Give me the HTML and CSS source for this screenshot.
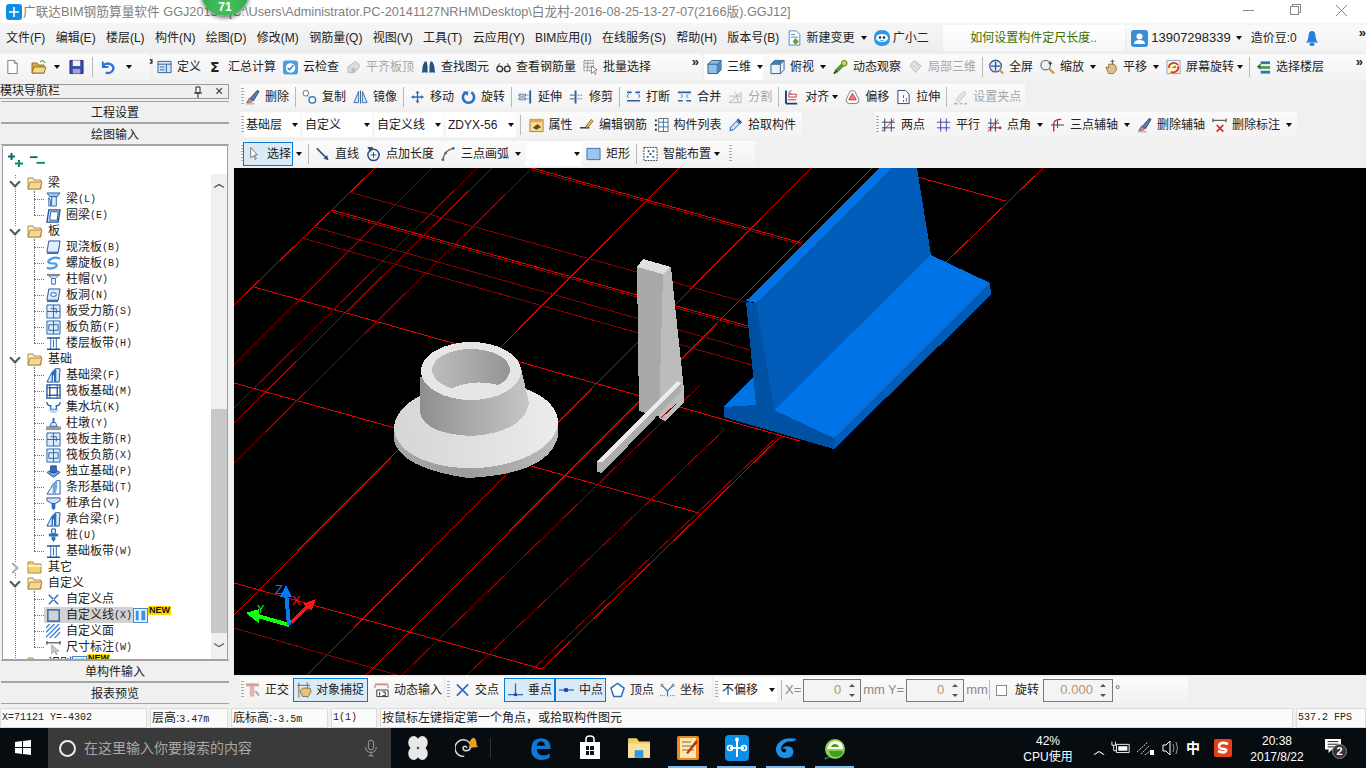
FILE: index.html
```html
<!DOCTYPE html>
<html lang="zh-CN">
<head>
<meta charset="utf-8">
<title>广联达BIM钢筋算量软件</title>
<link rel="stylesheet" href="styles.css">
</head>
<body>
<svg class="defs" width="0" height="0">
<defs>
<linearGradient id="gDisc" x1="0" x2="1" y1="0" y2="0"><stop offset="0" stop-color="#d6d6d6"/><stop offset=".5" stop-color="#e0e0e0"/><stop offset="1" stop-color="#ececec"/></linearGradient>
<linearGradient id="gRim" x1="0" x2="1" y1="0" y2="0"><stop offset="0" stop-color="#a8a8a8"/><stop offset=".45" stop-color="#9c9c9c"/><stop offset="1" stop-color="#bcbcbc"/></linearGradient>
<linearGradient id="gCone" x1="0" x2="1" y1="0" y2="0"><stop offset="0" stop-color="#8e8e8e"/><stop offset=".5" stop-color="#ababab"/><stop offset="1" stop-color="#c6c6c6"/></linearGradient>
<linearGradient id="gHole" x1="0" x2="1" y1="0" y2="0"><stop offset="0" stop-color="#bdbdbd"/><stop offset="1" stop-color="#949494"/></linearGradient>
</defs>
<symbol id="new" viewBox="0 0 16 16"><path d="M3 1h7l3 3v11H3z" fill="#fff" stroke="#777"/><path d="M10 1v3h3" fill="#ddd" stroke="#777"/></symbol>
<symbol id="open" viewBox="0 0 16 16"><path d="M1 4h5l1 2h6v8H1z" fill="#d9a93f" stroke="#96742a"/><path d="M3 8h12l-2 6H1z" fill="#f3d98c" stroke="#96742a"/><path d="M9 3q3-3 5 1" fill="none" stroke="#3a7d3a"/></symbol>
<symbol id="save" viewBox="0 0 16 16"><path d="M1 1h14v14H1z" fill="#3c4ba8" stroke="#27306e"/><path d="M4 1h8v6H4z" fill="#f2f2f2"/><path d="M4 10h8v5H4z" fill="#9aa3d4"/></symbol>
<symbol id="undo" viewBox="0 0 16 16"><path d="M3 2v6h6" fill="none" stroke="#2d75cf" stroke-width="2"/><path d="M3 7a6 5 0 1 1 3 7" fill="none" stroke="#2d75cf" stroke-width="2.6"/></symbol>
<symbol id="def" viewBox="0 0 16 16"><path d="M1 2h14v12H1z" fill="#d8e8f8" stroke="#2d5f99"/><path d="M1 5h14M3 8h5M3 11h5M10 5v9" stroke="#2d5f99"/></symbol>
<symbol id="cloud" viewBox="0 0 16 16"><rect x="0" y="1" width="16" height="15" rx="3" fill="#4a9fe3"/><circle cx="8" cy="9" r="5" fill="#fff"/><path d="M5 9l2 2 4-5" fill="none" stroke="#2d79c7" stroke-width="1.5"/></symbol>
<symbol id="flat" viewBox="0 0 16 16"><path d="M2 8l8-6 4 3v4l-6 5H2z" fill="#dcdcdc" stroke="#bbb"/><path d="M6 9h4v5H6z" fill="#bbb"/></symbol>
<symbol id="bino" viewBox="0 0 16 16"><path d="M1 14l1-8 2-4h2l1 5v7zM15 14l-1-8-2-4h-2L9 7v7z" fill="#27527f"/><path d="M2 14h4M10 14h4" stroke="#9bbbe0"/></symbol>
<symbol id="glass" viewBox="0 0 16 16"><circle cx="4" cy="10" r="3" fill="none" stroke="#333" stroke-width="1.4"/><circle cx="12" cy="10" r="3" fill="none" stroke="#333" stroke-width="1.4"/><path d="M1 9l3-5M15 9l-3-5M7 10h2" stroke="#333"/></symbol>
<symbol id="batch" viewBox="0 0 16 16"><path d="M1 1h10v11H1z" fill="#eef3f9" stroke="#777" stroke-dasharray="2 1"/><path d="M1 4h10M1 8h10M5 1v11" stroke="#999"/><path d="M9 7l6 4-3 1 2 3-1 1-2-3-2 2z" fill="#fff" stroke="#555" stroke-width=".7"/></symbol>
<symbol id="cube" viewBox="0 0 16 16"><path d="M1 5l4-4h10v10l-4 4H1z" fill="#8fc0e8" stroke="#2c5a86"/><path d="M1 5h10v10M11 5l4-4" fill="none" stroke="#2c5a86"/><path d="M11 5l4-4v10l-4 4z" fill="#4c88bd"/></symbol>
<symbol id="top" viewBox="0 0 16 16"><path d="M1 5l4-4h10v10l-4 4H1z" fill="#e9f2fa" stroke="#2c5a86"/><path d="M1 5h10v10M11 5l4-4" fill="none" stroke="#2c5a86"/><path d="M5 1h10l-4 4H1z" fill="#3e7cb4"/></symbol>
<symbol id="orbit" viewBox="0 0 16 16"><path d="M3 13L12 4" stroke="#4f9d2f" stroke-width="4"/><circle cx="12" cy="4" r="3" fill="#c7d94a" stroke="#52752a"/><path d="M1 15l3-3" stroke="#333" stroke-width="2"/></symbol>
<symbol id="part" viewBox="0 0 16 16"><path d="M2 6l5-5 7 6-6 7z" fill="#e2e2e2" stroke="#bdbdbd"/><path d="M5 6l4 3M8 3l4 4" stroke="#c9c9c9"/></symbol>
<symbol id="full" viewBox="0 0 16 16"><circle cx="7" cy="7" r="6.2" fill="#e6eefb" stroke="#3f5f90" stroke-width="1.4"/><path d="M7 2v10M2 7h10" stroke="#2656a6" stroke-width="1.4"/><path d="M11 11l4 4" stroke="#c79a3c" stroke-width="2.2"/></symbol>
<symbol id="zoom" viewBox="0 0 16 16"><circle cx="6" cy="6" r="5" fill="#eef2f6" stroke="#6f7f8f" stroke-width="1.4"/><path d="M10 10l5 5" stroke="#c79a3c" stroke-width="2.4"/><path d="M11 2v4M9 4h4" stroke="#333"/></symbol>
<symbol id="hand" viewBox="0 0 16 16"><path d="M3 8l3 1V5h6l2 3v4l-3 3H6z" fill="#dcc28c" stroke="#8d7440"/><path d="M10 0v5M8 2h4" stroke="#555"/></symbol>
<symbol id="rot" viewBox="0 0 16 16"><path d="M1 1h14v14H1z" fill="#fff6c8" stroke="#7ca7d3"/><path d="M3 9a5.5 5.5 0 0 1 10-3" fill="none" stroke="#d33" stroke-width="1.8"/><path d="M13 7a5.5 5.5 0 0 1-8 6" fill="none" stroke="#d33" stroke-width="1.8"/><path d="M6 9l4-3 1 3z" fill="#59a84a"/></symbol>
<symbol id="floor" viewBox="0 0 16 16"><path d="M5 2h10v3H5z" fill="#2c76b6"/><path d="M5 7h10v3H5z" fill="#46a04a"/><path d="M5 12h10v3H5z" fill="#2c76b6"/><path d="M5 4L1 8l4 3z" fill="#2a6b30"/></symbol>
<symbol id="del" viewBox="0 0 16 16"><path d="M2 14l3-5 3 3-2 2z" fill="#d88" stroke="#744"/><path d="M6 9l7-8 2 1-6 10z" fill="#5a7ec2" stroke="#345"/><path d="M1 15h9" stroke="#bbb" stroke-width="2"/></symbol>
<symbol id="copy" viewBox="0 0 16 16"><circle cx="4" cy="4" r="3" fill="#fff" stroke="#666"/><circle cx="11" cy="11" r="3.5" fill="#fff" stroke="#2c6fb3" stroke-width="1.4"/><path d="M6 7l3 2" stroke="#2c6fb3" stroke-dasharray="1 1"/></symbol>
<symbol id="mirror" viewBox="0 0 16 16"><path d="M6 2L1 14h5zM10 2l5 12h-5z" fill="#dbe8f6" stroke="#2c6fb3"/><path d="M8 1v14" stroke="#555"/></symbol>
<symbol id="move" viewBox="0 0 16 16"><path d="M8 1l2 3H6zM8 15l2-3H6zM1 8l3-2v4zM15 8l-3-2v4z" fill="#2c6fb3"/><path d="M8 3v10M3 8h10" stroke="#2c6fb3" stroke-width="1.4"/></symbol>
<symbol id="turn" viewBox="0 0 16 16"><path d="M5 3a6 6 0 1 0 6 0" fill="none" stroke="#2c6fc3" stroke-width="2.8"/><path d="M2 2l6 0-1 5z" fill="#2c6fc3"/></symbol>
<symbol id="ext" viewBox="0 0 16 16"><path d="M13 1v14" stroke="#2c5f9e" stroke-width="2"/><path d="M1 5h7v2H1zM1 9h7v2H1z" fill="none" stroke="#2c5f9e" stroke-width=".8"/><path d="M8 6h3M8 10h3" stroke="#555" stroke-dasharray="1 1"/></symbol>
<symbol id="trim" viewBox="0 0 16 16"><path d="M7 1v14" stroke="#2c5f9e" stroke-width="2"/><path d="M1 6h5M1 10h5" stroke="#2c5f9e"/><path d="M9 6h6M9 10h6" stroke="#777" stroke-dasharray="2 1"/></symbol>
<symbol id="brk" viewBox="0 0 16 16"><path d="M1 3h5M10 3h5M1 12h14" stroke="#2c5f9e" stroke-width="1.8"/><path d="M3 5l-2 2 2 2M13 5l2 2-2 2" fill="none" stroke="#2c6fb3"/></symbol>
<symbol id="mrg" viewBox="0 0 16 16"><path d="M1 3h14M1 12h5M10 12h5" stroke="#2c5f9e" stroke-width="1.8"/><path d="M4 5l2 2-2 2M12 5l-2 2 2 2" fill="none" stroke="#2c6fb3"/></symbol>
<symbol id="split" viewBox="0 0 16 16"><path d="M1 14L14 3v11z" fill="#eee" stroke="#bbb"/><path d="M1 7h12M8 2l3 12" stroke="#bbb"/></symbol>
<symbol id="algn" viewBox="0 0 16 16"><path d="M1 1v14M1 15h12" stroke="#223d7a" stroke-width="2"/><path d="M4 5h8v3H4z" fill="#fff" stroke="#c33"/><path d="M7 1L4 3l3 2" fill="none" stroke="#2c6fb3"/><path d="M3 11h9" stroke="#c33"/></symbol>
<symbol id="ofs" viewBox="0 0 16 16"><path d="M8 1q3 0 4 4l3 6q0 4-4 4H5q-4 0-4-4l3-6q1-4 4-4z" fill="#fff" stroke="#777"/><path d="M8 4l4 7H4z" fill="#e77" stroke="#c33"/></symbol>
<symbol id="str" viewBox="0 0 16 16"><path d="M2 1h8l4 4v10H2z" fill="#fff" stroke="#223d7a"/><path d="M8 6v3M8 11v2M11 9v4" stroke="#555"/></symbol>
<symbol id="grip" viewBox="0 0 16 16"><path d="M3 11l8-9 3 2-7 9z" fill="#e4e4e4" stroke="#c5c5c5"/><path d="M1 15h4M7 15h3M12 15h3" stroke="#bbb" stroke-width="2"/></symbol>
<symbol id="prop" viewBox="0 0 16 16"><path d="M1 2h14v13H1z" fill="#f7dc9c" stroke="#ad7f2a"/><path d="M1 2h14v3H1z" fill="#e9a64a"/><path d="M4 11l5-4 4 3-5 3z" fill="#6b4d1c"/></symbol>
<symbol id="edit" viewBox="0 0 16 16"><path d="M1 11h10" stroke="#222" stroke-width="1.4"/><path d="M7 10l6-8 2 2-6 7z" fill="#e8b958" stroke="#8d6c2a"/></symbol>
<symbol id="list" viewBox="0 0 16 16"><path d="M5 1h10v14H5z" fill="#fff" stroke="#666"/><path d="M5 5h10M5 10h10M10 1v14" stroke="#2c6fb3"/><path d="M1 3h2M1 8h2M1 13h2" stroke="#333" stroke-width="2"/></symbol>
<symbol id="pick" viewBox="0 0 16 16"><path d="M2 14l1-4 6-6 3 3-6 6z" fill="#cfe3f8" stroke="#1f58a8"/><path d="M9 3l2-2 4 4-2 2z" fill="#1f58a8"/></symbol>
<symbol id="two" viewBox="0 0 16 16"><path d="M4 1v14M11 1v14M1 5h14M1 11h14" stroke="#223d7a"/><path d="M2 14L14 2" stroke="#c22"/><circle cx="2" cy="14" r="1" fill="#3a3"/></symbol>
<symbol id="para" viewBox="0 0 16 16"><path d="M5 1v14M11 1v14M1 5h14M1 11h14" stroke="#3d3f9e"/></symbol>
<symbol id="ang" viewBox="0 0 16 16"><path d="M4 1v14M9 1v14M1 6h12M1 11h12" stroke="#223d7a"/><path d="M1 15L12 2" stroke="#c22"/><circle cx="14" cy="11" r="1.5" fill="#c22"/></symbol>
<symbol id="arcx" viewBox="0 0 16 16"><path d="M4 15V7q0-5 8-5" fill="none" stroke="#c22" stroke-width="1.4"/><path d="M1 8h14M8 3v8" stroke="#223d7a"/></symbol>
<symbol id="dim" viewBox="0 0 16 16"><path d="M1 1v4M15 1v4M1 3h14" stroke="#333"/><path d="M5 8l7 7M12 8l-7 7" stroke="#d22" stroke-width="1.8"/></symbol>
<symbol id="arrow" viewBox="0 0 16 16"><path d="M4 1v11l3-2 2 4 1-1-2-4h3z" fill="#fff" stroke="#555" stroke-width=".8"/></symbol>
<symbol id="line" viewBox="0 0 16 16"><path d="M2 2l12 12" stroke="#2a4f80" stroke-width="1.6"/><path d="M14 14l-5-1 4-4z" fill="#2a4f80"/></symbol>
<symbol id="plen" viewBox="0 0 16 16"><circle cx="8" cy="9" r="6" fill="none" stroke="#2a4f80" stroke-width="1.6"/><path d="M2 1h5l-2 4zM8 6v6M5 9h6" fill="#2a4f80" stroke="#2a4f80"/></symbol>
<symbol id="arc3" viewBox="0 0 16 16"><path d="M2 15Q3 4 13 2" fill="none" stroke="#c8542a" stroke-width="1.6"/><circle cx="13" cy="2" r="1.5" fill="#2c6fb3"/><circle cx="5" cy="7" r="1.5" fill="#2c6fb3"/><circle cx="2" cy="14" r="1.5" fill="#2c6fb3"/></symbol>
<symbol id="rect" viewBox="0 0 16 16"><path d="M1 2h14v12H1z" fill="#9ec5f0" stroke="#3a6cb0"/></symbol>
<symbol id="smart" viewBox="0 0 16 16"><path d="M1 1h14v14H1z" fill="#fff" stroke="#333" stroke-dasharray="2 1"/><path d="M5 4h2v2H5zM10 4h2v2h-2zM4 10h2v2H4zM10 10h2v2h-2zM7 7h2v2H7z" fill="#2c5f9e"/></symbol>
<symbol id="ortho" viewBox="0 0 16 16"><path d="M5 1h5v14H5z" fill="#e7b1b1"/><path d="M1 1h14v3H1z" fill="#d6a0a0"/><path d="M11 9l4 5" stroke="#aaa" stroke-width="2"/></symbol>
<symbol id="snap" viewBox="0 0 16 16"><path d="M2 0v16M11 0v16M0 3h14" stroke="#8a5d3a"/><path d="M3 9l3-3h8l1 4-3 5H6z" fill="#e3c27e" stroke="#8d7440"/></symbol>
<symbol id="dyn" viewBox="0 0 16 16"><path d="M1 1h14v2H1z" fill="#d88"/><path d="M1 3v3M15 3v3" stroke="#777"/><path d="M3 8h12v7H3z" fill="#fff" stroke="#333"/><path d="M6 10v4M9 10h3v4H9" stroke="#222" fill="none"/></symbol>
<symbol id="cross" viewBox="0 0 16 16"><path d="M2 2l12 12M14 2L2 14" stroke="#2d6fbd" stroke-width="1.8"/></symbol>
<symbol id="perp" viewBox="0 0 16 16"><path d="M8 1v12" stroke="#2d6fbd" stroke-width="1.4"/><path d="M0 13h16" stroke="#2d6fbd" stroke-width="1.4"/><rect x="6.500" y="11.500" width="3" height="3" fill="#2342a8"/></symbol>
<symbol id="mid" viewBox="0 0 16 16"><path d="M0 8h16" stroke="#2d6fbd" stroke-width="1.4"/><rect x="5.500" y="6" width="4" height="4" fill="#2342a8"/></symbol>
<symbol id="vert" viewBox="0 0 16 16"><path d="M8 1l7 5-3 9H4L1 6z" fill="#fff" stroke="#2d6fbd" stroke-width="1.6"/></symbol>
<symbol id="coord" viewBox="0 0 16 16"><path d="M8 9v6M8 9L2 3M8 9l6-6" stroke="#2d6fbd" stroke-width="1.3"/><circle cx="2" cy="3" r="1.200" fill="#fff" stroke="#333" stroke-width=".7"/><circle cx="14" cy="3" r="1.200" fill="#fff" stroke="#333" stroke-width=".7"/><path d="M0 14h5M11 14h5" stroke="#2d6fbd" stroke-dasharray="1 1"/></symbol>
<symbol id="fileg" viewBox="0 0 16 18"><path d="M2 1h8l4 4v12H2z" fill="#fff" stroke="#3c83c9"/><path d="M4 5h5M4 8h8" stroke="#3c83c9"/><path d="M9 9l4 4-4 4-3-4z" fill="#5fa62d"/></symbol>
<symbol id="bot" viewBox="0 0 18 18"><path d="M1 9q0-8 8-8t8 8q0 8-8 8t-8-8z" fill="#2a9ae8"/><ellipse cx="9" cy="9" rx="6" ry="4" fill="#fff"/><circle cx="7" cy="8.500" r="1.200" fill="#123"/><circle cx="11" cy="8.500" r="1.200" fill="#123"/><path d="M7 11q2 2 4 0" stroke="#2a9ae8" fill="none"/></symbol>
<symbol id="user" viewBox="0 0 17 17"><rect width="17" height="17" rx="3" fill="#3b8ed6"/><circle cx="8.500" cy="6.500" r="3" fill="#fff"/><path d="M3 14q0-4 5.500-4T14 14z" fill="#fff"/></symbol>
<symbol id="bell" viewBox="0 0 16 18"><path d="M8 1q4 0 4 6 0 4 3 7H1q3-3 3-7 0-6 4-6z" fill="#2a7de1"/><ellipse cx="8" cy="16" rx="3" ry="2" fill="#2a7de1"/></symbol>
<symbol id="folder" viewBox="0 0 16 14"><path d="M1 2h5l1 2h7v9H1z" fill="#fdf1c8" stroke="#a98b4a"/><path d="M3 6h12l-2 7H1z" fill="#f6d98f" stroke="#a98b4a"/></symbol>
<symbol id="fclosed" viewBox="0 0 16 14"><path d="M1 2h5l1 2h7v9H1z" fill="#f5d06b" stroke="#a98b4a"/><path d="M1 5h13v2H1z" fill="#fdf1c8"/></symbol>
<symbol id="beam" viewBox="0 0 16 16"><path d="M1 1h14l-3 4H4z" fill="#9cc8ef" stroke="#2664ad"/><path d="M6 5h5v10H6zM3 6l2 3v6H3z" fill="#dbe9f8" stroke="#2664ad"/></symbol>
<symbol id="ring" viewBox="0 0 16 16"><path d="M3 2h12l-2 13H1z" fill="#dbe9f8" stroke="#1e4f9c" stroke-width="1.4"/><path d="M5 4h8l-1 9H4z" fill="#fff" stroke="#1e4f9c"/></symbol>
<symbol id="slab" viewBox="0 0 16 16"><path d="M3 1h12l-2 12H1z" fill="#e2effb" stroke="#1e4f9c"/><path d="M1 13h12l2-12v3l-2 11H1z" fill="#2d6fbd"/></symbol>
<symbol id="spiral" viewBox="0 0 16 16"><path d="M15 3q-6-3-11 1t6 4q4 3-3 5-4 1-6-1" fill="none" stroke="#4b9fe6" stroke-width="2.4"/></symbol>
<symbol id="cap" viewBox="0 0 16 16"><path d="M1 2h14v2H1z" fill="#888"/><path d="M3 4h10l-3 3H6z" fill="#d8e6f4" stroke="#2664ad" stroke-width=".7"/><path d="M6 7h4v6H6z" fill="#fff" stroke="#2664ad"/></symbol>
<symbol id="hole" viewBox="0 0 16 16"><path d="M3 1h12l-2 12H1z" fill="#dbe9f8" stroke="#1e4f9c"/><ellipse cx="8" cy="7" rx="3" ry="2" fill="#fff" stroke="#1e4f9c"/><path d="M1 13h12v2H1z" fill="#2d6fbd"/></symbol>
<symbol id="rebar" viewBox="0 0 16 16"><path d="M1 1h14v14H1z" fill="#dbe9f8" stroke="#2664ad"/><path d="M8 1v14M1 8h14" stroke="#2664ad"/><path d="M5 5h6v5" fill="none" stroke="#2664ad"/></symbol>
<symbol id="neg" viewBox="0 0 16 16"><path d="M1 1h14v14H1z" fill="#dbe9f8" stroke="#2664ad"/><path d="M8 1v14M3 5h10v6H3z" fill="none" stroke="#2664ad"/></symbol>
<symbol id="band" viewBox="0 0 16 16"><path d="M1 2h14M1 14h14" stroke="#1e4f9c" stroke-width="1.6"/><path d="M5 2v12M11 2v12M8 4v8" stroke="#2664ad"/></symbol>
<symbol id="fbeam" viewBox="0 0 16 16"><path d="M1 15l3-6 2-4 5-5 4 1-1 14z" fill="#dbe9f8" stroke="#1e4f9c"/><path d="M6 5l5-5v15H6z" fill="#2d6fbd"/><path d="M8 8v7" stroke="#fff"/></symbol>
<symbol id="raft" viewBox="0 0 16 16"><path d="M1 1h14v14H1z" fill="#fff" stroke="#1e4f9c" stroke-width="1.4"/><path d="M4 4h8v8H4zM1 4h14M1 12h14M4 1v14M12 1v14" fill="none" stroke="#1e4f9c"/></symbol>
<symbol id="pit" viewBox="0 0 16 16"><path d="M1 2q0 4 4 4v4h6V6q4 0 4-4" fill="none" stroke="#2664ad" stroke-width="1.4"/><path d="M2 10q6 8 12 0" fill="#bcd7f4"/></symbol>
<symbol id="pier" viewBox="0 0 16 16"><path d="M0 11h16v4H0z" fill="#999"/><path d="M4 11l2-4h4l2 4z" fill="#dbe9f8" stroke="#2664ad"/><path d="M7 2h2v5H7z" fill="#2664ad"/></symbol>
<symbol id="iso" viewBox="0 0 16 16"><path d="M1 9l7-4 7 4-7 5z" fill="#6fa9e0" stroke="#1e4f9c"/><path d="M5 2h6v7H5z" fill="#2d6fbd" stroke="#1e4f9c"/></symbol>
<symbol id="strip" viewBox="0 0 16 16"><path d="M1 15l4-6 2-4 5-5 3 1v14z" fill="#fff" stroke="#1e4f9c"/><path d="M7 5l5-5v8l-2 7H7z" fill="#6fa9e0"/></symbol>
<symbol id="pcap" viewBox="0 0 16 16"><path d="M1 2h14v3L10 8H6L1 5z" fill="#cfe3f8" stroke="#1e4f9c"/><path d="M6 8h4v5l-2 2-2-2z" fill="#2d6fbd"/></symbol>
<symbol id="pile" viewBox="0 0 16 16"><path d="M6 1h4v5H6z" fill="#dbe9f8" stroke="#1e4f9c"/><path d="M3 6h10v3H3z" fill="#2d6fbd"/><path d="M6 9h4v3l-2 3-2-3z" fill="#2d6fbd"/></symbol>
<symbol id="xpt" viewBox="0 0 16 16"><path d="M3 3l10 10M13 3L3 13" stroke="#2664ad" stroke-width="1.4"/><path d="M7 7h2v2H7z" fill="#fff" stroke="#2664ad" stroke-width=".5"/></symbol>
<symbol id="xline" viewBox="0 0 16 16"><path d="M2 2h12v12H2z" fill="none" stroke="#1e4f9c" stroke-width="1.3"/><path d="M1 1h2v2H1zM13 1h2v2h-2zM1 13h2v2H1zM13 13h2v2h-2z" fill="#2d78d8"/></symbol>
<symbol id="hatch" viewBox="0 0 16 16"><path d="M0 4l4-4M0 9l9-9M0 14L14 0M4 15L15 4M9 15l6-6" stroke="#2d78d8" stroke-width="1.3"/></symbol>
<symbol id="dimc" viewBox="0 0 16 16"><path d="M1 1v4M15 1v4M1 3h14" stroke="#222"/><path d="M6 5v10l3-3 2 4 1-1-2-3h4z" fill="#c8c8c8" stroke="#999" stroke-width=".7"/></symbol>
<symbol id="cols" viewBox="0 0 16 16"><rect x=".5" y=".5" width="15" height="15" fill="#e6f1fc" stroke="#3c83c9"/><path d="M3 3h3v10H3zM9 3h4v10H9z" fill="#3c93e6"/></symbol>
<symbol id="win" viewBox="0 0 18 18"><path d="M1 3l7-1v6H1zM9 2l8-1v7H9zM1 9h7v6l-7-1zM9 9h8v7l-8-1z" fill="#fff"/></symbol>
<symbol id="mic" viewBox="0 0 16 20"><rect x="5" y="1" width="6" height="11" rx="3" fill="none" stroke="#aaa"/><path d="M2 9q0 6 6 6t6-6M8 15v4M5 19h6" fill="none" stroke="#aaa"/></symbol>
<symbol id="pin" viewBox="0 0 22 24"><ellipse cx="7" cy="7" rx="5" ry="6" fill="#e8e8e8"/><ellipse cx="15" cy="7" rx="5" ry="6" fill="#e8e8e8"/><ellipse cx="7" cy="17" rx="5" ry="6" fill="#e8e8e8"/><ellipse cx="15" cy="17" rx="5" ry="6" fill="#e8e8e8"/></symbol>
<symbol id="swirl" viewBox="0 0 26 24"><path d="M10 21a9 9 0 1 1 7-13q1 7-6 7-3-1-2-4 3-2 4 1" fill="none" stroke="#ddd" stroke-width="1.600"/><path d="M15 12q1-3 1-7 2-4 4-4t3 4q0 4 2 6z" fill="#e3a41c"/></symbol>
<symbol id="edge" viewBox="0 0 22 24"><path d="M11 3q9 0 9 10H7q1 6 6 6 3 0 6-2v4q-3 2-7 2Q2 23 2 13 2 3 11 3zm4 7q-1-4-4-4-3 0-4 4z" fill="#0f78d4"/></symbol>
<symbol id="store" viewBox="0 0 22 26"><path d="M1 7h20v17H1z" fill="#fff"/><path d="M7 7V4q0-3 4-3t4 3v3" fill="none" stroke="#fff" stroke-width="1.6"/><path d="M7 11h3v4H7zM11 11h4v4h-4zM7 16h3v4H7zM11 16h4v4h-4z" fill="#111"/></symbol>
<symbol id="expl" viewBox="0 0 22 22"><path d="M1 2h8l2 3h10v15H1z" fill="#f1cd62"/><path d="M1 7h20v13H1z" fill="#fbe29a"/><path d="M7 13h8v7H7z" fill="#2d9be3"/></symbol>
<symbol id="note" viewBox="0 0 24 26"><rect x="1" y="1" width="22" height="24" rx="2" fill="#f0871f"/><rect x="4" y="3" width="16" height="20" fill="#fce9b2"/><path d="M6 7h9M6 11h12M6 15h12" stroke="#8c6a2a"/><path d="M10 18L20 5l2 2-10 12z" fill="#b23b1b"/></symbol>
<symbol id="gblue" viewBox="0 0 24 26"><rect width="24" height="26" rx="4" fill="#0a8fe8"/><path d="M12 4v18M5 13h14" stroke="#fff" stroke-width="2"/><circle cx="12" cy="4.500" r="2" fill="#fff"/><circle cx="5" cy="13" r="2.500" fill="none" stroke="#fff" stroke-width="1.600"/><circle cx="19" cy="13" r="2.500" fill="none" stroke="#fff" stroke-width="1.600"/></symbol>
<symbol id="gg" viewBox="0 0 26 26"><path d="M24 3Q6 0 2 13q0 10 9 11 10 0 10-7 0-6-7-6-4 0-5 3 3-1 4 1t-2 3q-4-1-3-6 3-7 11-6 4 0 5-3z" fill="#1f90e6"/></symbol>
<symbol id="ie" viewBox="0 0 24 26"><circle cx="12" cy="14" r="10" fill="#8ed24c"/><path d="M4 14h16q0-8-8-8-6 0-8 8z" fill="#fff"/><path d="M8 12h8q-1-3-4-3t-4 3zM6 16q1 6 7 6 4 0 7-4l-1-2H8z" fill="#3f9e1f"/><path d="M3 22Q0 26 6 22" stroke="#2a7" fill="none"/></symbol>
<symbol id="batt" viewBox="0 0 22 16"><path d="M6 4h14v9H6z" fill="none" stroke="#fff"/><path d="M8 6h10v5H8z" fill="#fff"/><path d="M1 1v4h4V1M3 5v6h3" fill="none" stroke="#fff"/></symbol>
<symbol id="wifi" viewBox="0 0 20 16"><path d="M1 12L12 2M5 14l8-8M9 15l5-4" stroke="#ddd" stroke-dasharray="2 1" fill="none"/><path d="M14 10h4v5h-4z" fill="#fff"/></symbol>
<symbol id="vol" viewBox="0 0 18 16"><path d="M1 5h3l4-4v14l-4-4H1z" fill="none" stroke="#fff"/><path d="M11 4q2 4 0 8M14 2q3 6 0 12" fill="none" stroke="#999"/></symbol>
<symbol id="sogou" viewBox="0 0 18 18"><rect width="18" height="18" rx="2" fill="#e4411a"/><path d="M14 5Q6 2 5 7q0 3 5 3 4 1 1 3-3 1-7-1" fill="none" stroke="#fff" stroke-width="2.600"/></symbol>
<symbol id="noti" viewBox="0 0 20 18"><path d="M1 1h18v12H9l-4 4v-4H1z" fill="#fff"/><path d="M4 4h12M4 7h12M4 10h8" stroke="#111"/></symbol>
<symbol id="logo" viewBox="0 0 16 16"><rect width="16" height="16" rx="3" fill="#0d8ee6"/><path d="M8 3v10M3 8h10" stroke="#fff" stroke-width="1.600"/></symbol>
<symbol id="plus2" viewBox="0 0 15 14"><path d="M0 3.500h7M3.500 0v7" stroke="#0e6a63" stroke-width="2"/><path d="M7 10.500h8M11 7v7" stroke="#0e8a63" stroke-width="2"/></symbol>
<symbol id="minus2" viewBox="0 0 16 14"><path d="M0 4h8" stroke="#0e6a63" stroke-width="2"/><path d="M7 10h9" stroke="#0e8a63" stroke-width="2"/></symbol>
<symbol id="navpin" viewBox="0 0 10 12"><path d="M3 1h4v6H3zM1 7h8M5 7v5" fill="#fff" stroke="#222"/></symbol>
<symbol id="wclose" viewBox="0 0 11 11"><path d="M0 0l11 11M11 0L0 11" stroke="#888"/></symbol>
</svg>

<header class="titlebar">
  <svg class="logo"><use href="#logo"/></svg>
  <span class="ttext">广联达BIM钢筋算量软件 GGJ2013 - [C:\Users\Administrator.PC-20141127NRHM\Desktop\白龙村-2016-08-25-13-27-07(2166版).GGJ12]</span>
  <span class="badge">71</span>
  <span class="winbtns">
    <span class="wmin"></span><span class="wmax"></span><svg class="wclose"><use href="#wclose"/></svg>
  </span>
</header>

<nav class="menubar">
  <span>文件(F)</span><span>编辑(E)</span><span>楼层(L)</span><span>构件(N)</span><span>绘图(D)</span><span>修改(M)</span><span>钢筋量(Q)</span><span>视图(V)</span><span>工具(T)</span><span>云应用(Y)</span><span>BIM应用(I)</span><span>在线服务(S)</span><span>帮助(H)</span><span>版本号(B)</span>
  <span class="t t-new"><svg class="i"><use href="#fileg"/></svg>新建变更<b class="c"></b></span>
  <span class="t t-bot"><svg class="i i18"><use href="#bot"/></svg>广小二</span>
  <span class="tip">如何设置构件定尺长度..</span>
  <span class="acct">
    <svg class="i i17"><use href="#user"/></svg><span class="phone">13907298339</span><b class="c c2"></b><span class="bean">造价豆:0</span><svg class="i bell"><use href="#bell"/></svg><span class="more">»</span>
  </span>
</nav>

<div class="tb1">
  <div class="panel p-file">
    <svg class="i"><use href="#new"/></svg>
    <svg class="i i-open"><use href="#open"/></svg><b class="c"></b>
    <svg class="i i-save"><use href="#save"/></svg>
    <i class="sep"></i>
    <svg class="i"><use href="#undo"/></svg><b class="c"></b>
    <span class="more m-up">»</span>
  </div>
  <div class="panel p-main">
    <span class="t"><svg class="i"><use href="#def"/></svg>定义</span>
    <span class="t"><span class="sigma">Σ</span>汇总计算</span>
    <span class="t"><svg class="i"><use href="#cloud"/></svg>云检查</span>
    <span class="t off"><svg class="i"><use href="#flat"/></svg>平齐板顶</span>
    <span class="t"><svg class="i"><use href="#bino"/></svg>查找图元</span>
    <span class="t"><svg class="i"><use href="#glass"/></svg>查看钢筋量</span>
    <span class="t"><svg class="i"><use href="#batch"/></svg>批量选择</span>
    <span class="more m-end">»</span>
  </div>
  <div class="panel p-view">
    <span class="t whitebtn"><svg class="i"><use href="#cube"/></svg>三维<b class="c"></b></span>
    <span class="t"><svg class="i"><use href="#top"/></svg>俯视<b class="c"></b></span>
    <span class="t"><svg class="i"><use href="#orbit"/></svg>动态观察</span>
    <span class="t off"><svg class="i"><use href="#part"/></svg>局部三维</span>
    <i class="sep"></i>
    <span class="t"><svg class="i"><use href="#full"/></svg>全屏</span>
    <span class="t"><svg class="i"><use href="#zoom"/></svg>缩放<b class="c"></b></span>
    <span class="t"><svg class="i"><use href="#hand"/></svg>平移<b class="c"></b></span>
    <span class="t"><svg class="i"><use href="#rot"/></svg>屏幕旋转<b class="c c1"></b></span>
    <i class="sep"></i>
    <span class="t"><svg class="i"><use href="#floor"/></svg>选择楼层</span>
    <span class="more m-end">»</span>
  </div>
</div>

<div class="work">
  <aside class="nav">
    <div class="navhead"><span>模块导航栏</span><svg class="navpin"><use href="#navpin"/></svg><span class="navx">×</span></div>
    <div class="navbtn">工程设置</div>
    <div class="navbtn">绘图输入</div>
    <div class="treebox">
      <div class="treetools"><svg class="pm"><use href="#plus2"/></svg><svg class="pm"><use href="#minus2"/></svg></div>
      <div class="treewrap">
        <ul class="tree">
          <li class="par"><span class="chev"></span><svg class="fd"><use href="#folder"/></svg>梁</li>
          <li class="ch"><svg class="ti"><use href="#beam"/></svg>梁<i>(L)</i></li>
          <li class="ch last"><svg class="ti"><use href="#ring"/></svg>圈梁<i>(E)</i></li>
          <li class="par"><span class="chev"></span><svg class="fd"><use href="#folder"/></svg>板</li>
          <li class="ch"><svg class="ti"><use href="#slab"/></svg>现浇板<i>(B)</i></li>
          <li class="ch"><svg class="ti"><use href="#spiral"/></svg>螺旋板<i>(B)</i></li>
          <li class="ch"><svg class="ti"><use href="#cap"/></svg>柱帽<i>(V)</i></li>
          <li class="ch"><svg class="ti"><use href="#hole"/></svg>板洞<i>(N)</i></li>
          <li class="ch"><svg class="ti"><use href="#rebar"/></svg>板受力筋<i>(S)</i></li>
          <li class="ch"><svg class="ti"><use href="#neg"/></svg>板负筋<i>(F)</i></li>
          <li class="ch last"><svg class="ti"><use href="#band"/></svg>楼层板带<i>(H)</i></li>
          <li class="par"><span class="chev"></span><svg class="fd"><use href="#folder"/></svg>基础</li>
          <li class="ch"><svg class="ti"><use href="#fbeam"/></svg>基础梁<i>(F)</i></li>
          <li class="ch"><svg class="ti"><use href="#raft"/></svg>筏板基础<i>(M)</i></li>
          <li class="ch"><svg class="ti"><use href="#pit"/></svg>集水坑<i>(K)</i></li>
          <li class="ch"><svg class="ti"><use href="#pier"/></svg>柱墩<i>(Y)</i></li>
          <li class="ch"><svg class="ti"><use href="#rebar"/></svg>筏板主筋<i>(R)</i></li>
          <li class="ch"><svg class="ti"><use href="#neg"/></svg>筏板负筋<i>(X)</i></li>
          <li class="ch"><svg class="ti"><use href="#iso"/></svg>独立基础<i>(P)</i></li>
          <li class="ch"><svg class="ti"><use href="#strip"/></svg>条形基础<i>(T)</i></li>
          <li class="ch"><svg class="ti"><use href="#pcap"/></svg>桩承台<i>(V)</i></li>
          <li class="ch"><svg class="ti"><use href="#fbeam"/></svg>承台梁<i>(F)</i></li>
          <li class="ch"><svg class="ti"><use href="#pile"/></svg>桩<i>(U)</i></li>
          <li class="ch last"><svg class="ti"><use href="#band"/></svg>基础板带<i>(W)</i></li>
          <li class="par"><span class="chev closed"></span><svg class="fd"><use href="#fclosed"/></svg>其它</li>
          <li class="par"><span class="chev"></span><svg class="fd"><use href="#folder"/></svg>自定义</li>
          <li class="ch"><svg class="ti"><use href="#xpt"/></svg>自定义点</li>
          <li class="ch"><span class="sel"><svg class="ti"><use href="#xline"/></svg>自定义线<i>(X)</i></span><svg class="ti2"><use href="#cols"/></svg><span class="newtag">NEW</span></li>
          <li class="ch"><svg class="ti"><use href="#hatch"/></svg>自定义面</li>
          <li class="ch last"><svg class="ti"><use href="#dimc"/></svg>尺寸标注<i>(W)</i></li>
          <li class="par"><span class="chev"></span><svg class="fd"><use href="#folder"/></svg>识别<svg class="ti2"><use href="#cols"/></svg><span class="newtag">NEW</span></li>
        </ul>
        <div class="scroll">
          <span class="sarrow">︿</span>
          <span class="strack"><span class="sthumb"></span></span>
          <span class="sarrow">﹀</span>
        </div>
      </div>
    </div>
    <div class="navbtn nb2">单构件输入</div>
    <div class="navbtn">报表预览</div>
  </aside>

  <main class="main">
    <div class="row ra">
      <div class="panel p-a">
        <i class="grip"></i>
        <span class="t"><svg class="i"><use href="#del"/></svg>删除</span><i class="sep"></i>
        <span class="t"><svg class="i"><use href="#copy"/></svg>复制</span>
        <span class="t"><svg class="i"><use href="#mirror"/></svg>镜像</span><i class="sep"></i>
        <span class="t"><svg class="i"><use href="#move"/></svg>移动</span>
        <span class="t"><svg class="i"><use href="#turn"/></svg>旋转</span><i class="sep"></i>
        <span class="t"><svg class="i"><use href="#ext"/></svg>延伸</span>
        <span class="t"><svg class="i"><use href="#trim"/></svg>修剪</span><i class="sep"></i>
        <span class="t"><svg class="i"><use href="#brk"/></svg>打断</span>
        <span class="t"><svg class="i"><use href="#mrg"/></svg>合并</span>
        <span class="t off"><svg class="i"><use href="#split"/></svg>分割</span><i class="sep"></i>
        <span class="t"><svg class="i"><use href="#algn"/></svg>对齐<b class="c c1"></b></span>
        <span class="t"><svg class="i"><use href="#ofs"/></svg>偏移</span>
        <span class="t"><svg class="i"><use href="#str"/></svg>拉伸</span><i class="sep"></i>
        <span class="t off"><svg class="i"><use href="#grip"/></svg>设置夹点</span>
      </div>
    </div>
    <div class="row rb">
      <div class="panel p-b">
        <i class="grip"></i>
        <span class="combo cw56">基础层<b class="c"></b></span>
        <span class="combo cw69">自定义<b class="c"></b></span>
        <span class="combo cw68">自定义线<b class="c"></b></span>
        <span class="combo cw70">ZDYX-56<b class="c"></b></span>
        <i class="sep"></i>
        <span class="t"><svg class="i"><use href="#prop"/></svg>属性</span>
        <span class="t"><svg class="i"><use href="#edit"/></svg>编辑钢筋</span>
        <span class="t"><svg class="i"><use href="#list"/></svg>构件列表</span>
        <span class="t"><svg class="i"><use href="#pick"/></svg>拾取构件</span>
      </div>
      <div class="panel p-b2">
        <i class="grip"></i>
        <span class="t t-two"><svg class="i"><use href="#two"/></svg>两点</span>
        <span class="t"><svg class="i"><use href="#para"/></svg>平行</span>
        <span class="t"><svg class="i"><use href="#ang"/></svg>点角<b class="c"></b></span>
        <span class="t"><svg class="i"><use href="#arcx"/></svg>三点辅轴<b class="c"></b></span>
        <span class="t"><svg class="i"><use href="#del"/></svg>删除辅轴</span>
        <span class="t"><svg class="i"><use href="#dim"/></svg>删除标注<b class="c"></b></span>
      </div>
    </div>
    <div class="row rc">
      <div class="panel p-c">
        <i class="grip"></i>
        <span class="t active pick"><svg class="i"><use href="#arrow"/></svg>选择</span><b class="c c3"></b><i class="sep"></i>
        <span class="t"><svg class="i"><use href="#line"/></svg>直线</span>
        <span class="t"><svg class="i"><use href="#plen"/></svg>点加长度</span>
        <span class="t"><svg class="i"><use href="#arc3"/></svg>三点画弧<b class="c"></b></span>
        <span class="combo cw56 empty"><b class="c"></b></span>
        <span class="t"><svg class="i"><use href="#rect"/></svg>矩形</span><i class="sep"></i>
        <span class="t"><svg class="i"><use href="#smart"/></svg>智能布置<b class="c c1"></b></span>
      </div>
      <div class="panel p-c2"><i class="grip"></i></div>
    </div>

    <svg class="canvas" viewBox="234 168 1132 507" width="1132" height="507" shape-rendering="crispEdges">
      <rect x="234" y="168" width="1132" height="507" fill="#000"/>
      <g fill="none" stroke="#e00000" stroke-width="1">
        <path d="M254 287L800 441M234 383L699 513M234 583L542 669M332 210L748 326M532 168L802 243M884 168L1006 201"/>
        <path d="M375 168L234 305M679 168L234 615M811 168L307 675M872 168L366 675M781 436L542 669M1043 168L945 263"/>
        <path d="M492 168L234 423" stroke="#b40000"/>
      </g>
      <g fill="none" stroke="#8c0000" stroke-width="1">
        <path d="M234 628L397 675M349 192L745 302M314 227L750 350M302 238L752 365M332 212L748 328M532 170L802 245"/>
        <path d="M432 168L234 365M477 168L234 408M532 168L234 463M700 385L402 675M779 435L527 675M724 430L467 675"/>
      </g>

      <g class="washer">
        <path d="M394 427V440Q400 468 468 478Q550 474 558 436V423z" fill="url(#gRim)"/>
        <ellipse cx="476" cy="425" rx="82" ry="43" fill="url(#gDisc)" transform="rotate(-3 476 425)"/>
        <path d="M420 377V413Q425 434 472 436Q524 432 529 403L521 368z" fill="url(#gCone)"/>
        <ellipse cx="471" cy="371" rx="50" ry="29" fill="#e6e6e6"/>
        <ellipse cx="471" cy="370" rx="39" ry="21" fill="url(#gHole)"/>
        <path d="M448 390Q472 378 498 385Q488 391 471 392Q456 392 448 390z" fill="#e6e6e6"/>
      </g>

      <g class="wall">
        <path d="M637 267L643 259L671 267L663 274z" fill="#e0e0e0"/>
        <path d="M637 267L663 274L665 418L645 413L639 411z" fill="#a9a9a9"/>
        <path d="M663 274L671 267L684 390V402L665 421L659 418z" fill="#bcbcbc"/>
        <path d="M602 462L681 383V391L602 473L597 472V462z" fill="#adadad"/>
        <path d="M677 381L681 383L602 462H597z" fill="#ececec"/>
        <path d="M661 418L676 404" stroke="#a00000" fill="none"/>
      </g>

      <g class="tbeam">
        <path d="M723.500 407L753.600 377L756 405z" fill="#0073e6"/>
        <path d="M931 255L990 283L834 438L774 410z" fill="#0073e6"/>
        <path d="M990 283L991 295L834 449V438z" fill="#005cb8"/>
        <path d="M756 303L892 168H917L931 255L774 410z" fill="#005cb8"/>
        <path d="M746 301L880 168H892L756 303z" fill="#0073e6"/>
        <path d="M746 302L756 303L774 410L834 438V449L723.500 417V407L756 405z" fill="#0050a4"/>
      </g>

      <g class="axes" fill="none">
        <path d="M289 625L286 592" stroke="#0a78f0" stroke-width="4"/>
        <path d="M286 586L281 596H291z" fill="#0a78f0" stroke="#0a78f0"/>
        <path d="M289 625L258 616" stroke="#14ff14" stroke-width="4"/>
        <path d="M247 613L258 610V622z" fill="#14ff14" stroke="#14ff14"/>
        <path d="M291 623L309 605" stroke="#ff1414" stroke-width="4"/>
        <path d="M315 600L304 604L311 610z" fill="#ff1414" stroke="#ff1414"/>
        <rect x="287" y="620" width="4" height="5" fill="#0a78f0"/>
        <text x="275" y="594" class="ax az">Z</text>
        <text x="257" y="613" class="ax ay">Y</text>
        <text x="292" y="605" class="ax ax1">X</text>
      </g>
    </svg>

    <div class="row rd">
      <div class="panel p-d">
        <i class="grip"></i>
        <span class="t"><svg class="i"><use href="#ortho"/></svg>正交</span>
        <span class="t active snap"><svg class="i"><use href="#snap"/></svg>对象捕捉</span>
        <span class="t"><svg class="i"><use href="#dyn"/></svg>动态输入</span>
      </div>
      <div class="panel p-d2">
        <i class="grip"></i>
        <span class="t"><svg class="i"><use href="#cross"/></svg>交点</span>
        <span class="t active seg"><svg class="i"><use href="#perp"/></svg>垂点</span>
        <span class="t active seg"><svg class="i"><use href="#mid"/></svg>中点</span>
        <span class="t"><svg class="i"><use href="#vert"/></svg>顶点</span>
        <span class="t t-coord"><svg class="i"><use href="#coord"/></svg>坐标</span>
      </div>
      <div class="panel p-d3">
        <i class="grip"></i>
        <span class="combo cw57">不偏移<b class="c"></b></span>
        <i class="sep s-off"></i>
        <span class="lbl">X=</span>
        <span class="spin s58">0<span class="arrows"><b class="au"></b><b class="ad"></b></span></span>
        <span class="lbl">mm</span><span class="lbl ly">Y=</span>
        <span class="spin s58">0<span class="arrows"><b class="au"></b><b class="ad"></b></span></span>
        <span class="lbl">mm</span>
        <i class="sep"></i>
        <span class="check"></span>
        <span class="rotl">旋转</span>
        <span class="spin s70">0.000<span class="arrows"><b class="au"></b><b class="ad"></b></span></span>
        <span class="lbl deg">°</span>
      </div>
    </div>
  </main>
</div>

<footer class="status">
  <span class="cell c1w mono">X=71121 Y=-4302</span>
  <span class="cell c2w"><span class="ml">层高:</span><span class="mono">3.47m</span></span>
  <span class="cell c3w"><span class="ml">底标高:</span><span class="mono">-3.5m</span></span>
  <span class="cell c4w mono">1(1)</span>
  <span class="cell c5w">按鼠标左键指定第一个角点，或拾取构件图元</span>
  <span class="cell c6w mono">537.2 FPS</span>
</footer>

<div class="taskbar">
  <svg class="start"><use href="#win"/></svg>
  <div class="search"><span class="cortana"></span><span class="ph">在这里输入你要搜索的内容</span><svg class="mic"><use href="#mic"/></svg></div>
  <div class="apps">
    <span class="app"><svg class="a"><use href="#pin"/></svg></span>
    <span class="app"><svg class="a"><use href="#swirl"/></svg></span>
    <i class="tsep"></i>
    <span class="app"><svg class="a"><use href="#edge"/></svg></span>
    <span class="app"><svg class="a"><use href="#store"/></svg></span>
    <span class="app"><svg class="a"><use href="#expl"/></svg></span>
    <span class="app on"><svg class="a"><use href="#note"/></svg></span>
    <span class="app on"><svg class="a"><use href="#gblue"/></svg></span>
    <span class="app on"><svg class="a"><use href="#gg"/></svg></span>
    <span class="app on"><svg class="a"><use href="#ie"/></svg></span>
  </div>
  <div class="cpu"><span>42%</span><span>CPU使用</span></div>
  <div class="tray">
    <span class="up">︿</span>
    <svg class="b"><use href="#batt"/></svg>
    <svg class="b"><use href="#wifi"/></svg>
    <svg class="b"><use href="#vol"/></svg>
    <span class="ime">中</span>
    <svg class="b sg"><use href="#sogou"/></svg>
  </div>
  <div class="clock"><span>20:38</span><span>2017/8/22</span></div>
  <div class="notif"><svg class="nt"><use href="#noti"/></svg><span class="nb">2</span></div>
</div>
</body>
</html>
```
FILE: styles.css
```css
*{box-sizing:border-box}
html,body{margin:0;padding:0}
body{width:1366px;height:768px;overflow:hidden;background:#f0f0f0;display:flex;flex-direction:column;font:12px/16px "Liberation Sans","Noto Sans CJK SC",sans-serif;color:#222}
.defs{position:absolute}
ul{list-style:none;margin:0;padding:0}

.titlebar{height:23px;flex:none;background:#fff;display:flex;align-items:center;padding-left:6px;position:relative;overflow:hidden}
.logo{width:16px;height:16px;margin-right:1px}
.ttext{color:#808080;font-size:12.7px;white-space:nowrap}
.badge{position:absolute;left:201px;top:-32px;width:48px;height:48px;border-radius:50%;background:radial-gradient(circle at 50% 80%,#46c25e,#1f9a3c);color:#fff;font-weight:bold;text-align:center;padding-top:31px;line-height:16px;box-shadow:0 2px 4px rgba(0,0,0,.55)}
.winbtns{position:absolute;right:0;top:0;height:23px;display:block;width:140px}
.wmin{position:absolute;left:17px;top:10px;width:11px;height:1px;background:#888}
.wmax{position:absolute;left:64px;top:6px;width:9px;height:9px;border:1px solid #888;background:#fff;box-shadow:2px -2px 0 -1px #fff,2px -2px 0 0 #888}
.wclose{position:absolute;left:110px;top:5px;width:11px;height:11px}

.menubar{height:30px;flex:none;display:flex;align-items:center;padding-left:6px;gap:10.3px;background:linear-gradient(#f6f6f6,#ededed);white-space:nowrap}
.t{display:inline-flex;align-items:center;white-space:nowrap;height:24px}
.t-new{margin-left:-3px}
.t-bot{margin-left:-4px}
.off{color:#a6a6a6}
.i{width:15px;height:16px;margin-right:5px;flex:none}
.i18{width:18px;height:18px;margin-right:2px}
.i17{width:17px;height:17px;margin-right:3px}
.c{display:inline-block;width:0;height:0;border:3.500px solid transparent;border-top:4px solid #111;border-bottom:0;margin-left:6px;flex:none}
.c1{margin-left:3px}
.c2{margin:0 9px 0 5px}
.c3{margin:0 0 0 2px}
.tip{width:187px;height:26px;margin-left:4px;background:linear-gradient(#fff,#f6f6f6);color:#3c6e00;line-height:26px;padding-left:27px;font-size:12px}
.acct{width:240px;height:26px;margin-left:-8px;background:linear-gradient(#fafafa,#f2f2f2);display:flex;align-items:center;padding-left:4px}
.phone{font-size:13px}
.bell{margin:0 0 0 8px;width:14px;height:18px}
.more{font-size:13px;font-weight:bold;line-height:10px}
.acct .more{margin-left:40px;margin-top:-10px}

.tb1{height:28px;flex:none;display:flex;padding-top:1px;gap:3px}
.panel{display:flex;align-items:center;background:linear-gradient(#fbfbfb,#f2f2f2);height:26px;white-space:nowrap}
.p-file{width:150px;padding-left:5px;gap:0}
.i-open{margin:0 0 0 5px;width:18px}
.i-save{margin:0 6px 0 9px;width:15px}
.p-file .sep{margin:0 7px 0 2px}
.m-up{margin:-12px 0 0 17px}
.p-main{width:549px;padding-left:4px;gap:7px}
.p-main .t{gap:0}
.sigma{font:bold 14px "DejaVu Sans",sans-serif;width:18px;margin-left:2px}
.m-end{margin-left:auto;margin-right:3px;margin-top:-10px}
.p-view{flex:1;margin-left:-1px;padding-left:0;gap:7px}
.whitebtn{background:#fff;padding-left:3px;height:26px;width:59px;margin-right:0}
.sep{display:block;width:1px;height:20px;background:#b8b8b8;margin:0 -1px;flex:none}
.grip{display:block;width:3px;height:18px;margin:0 -6px 0 1px;flex:none;background:repeating-linear-gradient(#aaa 0 1px,transparent 1px 3px)}

.work{height:625px;flex:none;display:flex}
.nav{width:230px;flex:none;padding-top:3px;display:flex;flex-direction:column}
.navhead{height:15px;border:1px solid #9a9a9a;border-left:0;background:#efefef;display:flex;align-items:center;line-height:13px;margin-right:1px}
.navpin{margin-left:auto;margin-right:10px;width:10px;height:12px}
.navx{margin-right:3px;width:12px;text-align:center;font-size:14px;color:#333}
.navbtn{height:22px;flex:none;margin:0 1px;border-top:1px solid #a4a4a4;border-bottom:1px solid #a4a4a4;background:#f0f0f0;text-align:center;line-height:22px}
.navhead + .navbtn{margin-top:2px}
.treebox{height:515px;margin:0 2px;border:1px solid #a0a0a0;background:#fff;display:flex;flex-direction:column;flex:none}
.treetools{height:28px;display:flex;align-items:center;padding-left:5px;gap:7px;flex:none}
.pm{width:15px;height:14px}
.treewrap{flex:1;display:flex;min-height:0;overflow:hidden;position:relative}
.tree{flex:1;overflow:hidden;font-size:12px;padding-top:1px}
.tree li{height:16px;display:flex;align-items:center;white-space:nowrap;line-height:16px;background-image:repeating-linear-gradient(#777 0 1px,transparent 1px 2px);background-size:1px 100%;background-position:12px 0;background-repeat:no-repeat}
.tree i{font:10px "Liberation Mono",monospace;margin-left:0}
.par{padding-left:7px}
.chev{display:block;width:9px;height:9px;flex:none;margin-right:8px;position:relative;background:#fff}
.chev::before{content:"";position:absolute;left:1px;top:-1px;width:6px;height:6px;border-right:2px solid #555;border-bottom:2px solid #555;transform:rotate(45deg)}
.chev.closed::before{transform:rotate(-45deg);left:-1px;top:1px;border-color:#aaa}
.fd{width:16px;height:14px;margin-right:5px;flex:none}
.ch{padding-left:31px;position:relative}
.ch::before{content:"";display:block;width:10px;height:0;border-top:1px dotted #777;flex:none}
.ch::after{content:"";position:absolute;left:31px;top:0;height:100%;width:0;border-left:1px dotted #777}
.ch.last::after{height:8px}
.ti{width:15px;height:15px;margin:0 5px 0 2px;flex:none}
.sel{display:flex;align-items:center;background:#d2d2d2;height:16px;width:89px}
.ti2{width:15px;height:15px;flex:none}
.newtag{font:bold 9px/9px "Liberation Sans",sans-serif;background:#ffd800;color:#111;padding:0 1px;margin:-9px 0 0 0}
.scroll{width:16px;flex:none;background:#f0f0f0;display:flex;flex-direction:column;margin-top:-1px}
.sarrow{height:20px;flex:none;text-align:center;font-size:11px;line-height:20px;color:#555;font-weight:bold}
.strack{flex:1;position:relative;display:block}
.sthumb{display:block;margin-top:216px;height:224px;background:#c8c8c8}

.main{flex:1;display:flex;flex-direction:column;padding-top:3px;min-width:0}
.row{display:flex;flex:none;padding-left:10px}
.ra{height:27px}
.rb{height:29px;padding-top:1px}
.rc{height:27px;padding-top:1px;margin-bottom:1px}
.p-a{width:785px;gap:7px}
.p-a .sep,.p-c .sep,.p-d3 .sep{margin:0 -1px}
.p-b{width:562px;gap:3px}
.p-b .grip{margin-right:-3px}
.p-b .sep{margin:0 1px}
.p-b .t{margin-left:3.5px}
.p-b2{width:422px;margin-left:73px;gap:7px}
.p-b2 .grip{margin-right:-5px}
.t-two{margin-right:4px}
.p-c{width:483px;gap:7px}
.p-c .grip{margin-right:-8px}
.p-c2{width:32px;padding-left:5px}
.combo{height:24px;background:#fff;display:flex;align-items:center;padding-left:2px;flex:none}
.combo .c{margin-left:auto;margin-right:2px}
.cw56{width:56px}.cw69{width:69px}.cw68{width:68px}.cw70{width:70px}.cw57{width:57px}
.empty{margin:0 -3px 0 -2px}
.active{background:#dbeaf7;border:1px solid #0a78d2;height:24px}
.pick{width:50px;padding-left:3px;margin-right:-6px}
.canvas{display:block;flex:none;margin-left:4px}
.rd{height:31px;padding-top:2px;gap:3px}
.p-d{width:203px;gap:4px}
.p-d .grip{margin-right:-3px}
.snap{padding-left:3px;width:75px;margin-right:2px}
.snap .i{margin-right:4px}
.p-d2{width:266px;gap:4px}
.p-d2 .grip{margin-right:1px}
.seg{width:51px;padding-left:3px}
.t + .seg{margin-left:1px}
.seg + .seg{margin-left:-4px}
.t-coord{margin-left:2px}
.p-d3{flex:none;width:474px;margin-left:-1px;gap:2px}
.p-d3 .grip{margin-right:0}
.p-d3 .s-off{margin:0 1px 0 2px}
.lbl{color:#888;font-size:13px}
.ly{margin-left:1px}
.deg{color:#555}
.spin{height:23px;border:1px solid #777;background:#f4f4f4;display:flex;align-items:center;justify-content:flex-end;color:#b9936a;font-size:13px;padding-right:3px;flex:none}
.s58{width:58px}.s70{width:70px}
.arrows{display:flex;flex-direction:column;gap:7px;width:11px;margin-left:5px;align-items:center}
.au,.ad{display:block;width:0;height:0;border:3px solid transparent}
.au{border-top:0;border-bottom:3px solid #555}
.ad{border-bottom:0;border-top:3px solid #555}
.check{width:11px;height:11px;border:1px solid #888;background:#fff;margin-left:5px}
.rotl{margin:0 2px 0 6px}

.status{height:22px;flex:none;display:flex;gap:3px;padding:2px 0 0;background:#f0f0f0}
.cell{height:20px;background:#fbfbfb;border:1px solid #dcdcdc;line-height:18px;padding-left:1px;white-space:nowrap;flex:none}
.mono{font:10px/18px "Liberation Mono",monospace}
.ml{font-size:12px}
.c1w{width:147px}.c2w{width:78px}.c3w{width:97px}.c4w{width:46px}.c5w{width:913px}.c6w{width:70px}

.taskbar{height:40px;flex:none;background:#070c11;display:flex;align-items:center;color:#fff;position:relative}
.start{width:18px;height:18px;margin:0 16px 0 14px;flex:none}
.search{width:343px;height:40px;background:#3a3a3a;display:flex;align-items:center;padding-left:11px;flex:none}
.cortana{width:17px;height:17px;border:2px solid #eee;border-radius:50%;margin-right:8px;flex:none}
.ph{color:#a8a8a8;font-size:14px;width:280px;flex:none}
.mic{width:14px;height:20px}
.apps{display:flex;height:40px;width:486px;align-items:center;margin-left:2px;flex:none}
.app{width:49px;height:40px;display:flex;align-items:center;justify-content:center;position:relative;flex:none}
.app.on::after{content:"";position:absolute;left:5px;right:5px;bottom:0;height:2px;background:#7ab8ec}
.a{width:24px;height:26px}
.tsep{display:block;width:1px;height:20px;background:#333;margin:0 25px 0 -1px;flex:none}
.cpu{width:60px;margin-left:139px;display:flex;flex-direction:column;align-items:center;font-size:12px;line-height:16px;margin-top:2px;flex:none}
.tray{display:flex;align-items:center;margin-left:14px;width:155px;flex:none;gap:5px}
.up{font-size:11px;width:14px;text-align:center;margin-top:4px}
.b{width:20px;height:16px;flex:none}
.ime{font-size:14px;width:16px;font-weight:bold}
.sg{width:18px;height:18px;margin-left:7px}
.clock{width:66px;display:flex;flex-direction:column;align-items:center;margin-top:2px;flex:none;margin-left:-3px}
.notif{margin-left:14px;position:relative;width:24px;height:24px;flex:none}
.nt{width:18px;height:16px;margin-top:2px;display:block}
.nb{position:absolute;left:8px;top:8px;width:15px;height:15px;border-radius:50%;background:#333;border:1px solid #888;font-size:11px;font-weight:bold;text-align:center;line-height:13px}

.ax{font:9px "Liberation Sans",sans-serif;stroke:none}
.az{fill:#0a78f0;font-size:13px}
.ay{fill:#14ff14;font-size:11px}
.ax1{fill:#ff1414;font-size:13px}
```
